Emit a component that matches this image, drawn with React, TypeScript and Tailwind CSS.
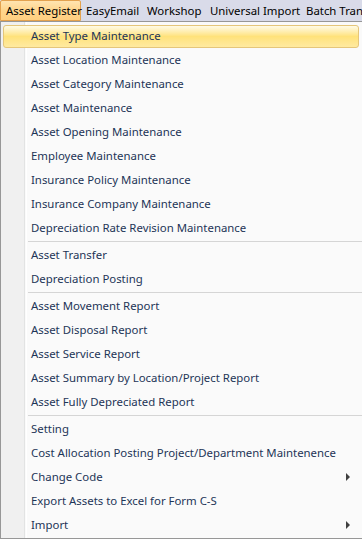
import React from "react";

type Entry = { label: string; sub?: boolean; active?: boolean } | "sep";

const entries: Entry[] = [
  { label: "Asset Type Maintenance", active: true },
  { label: "Asset Location Maintenance" },
  { label: "Asset Category Maintenance" },
  { label: "Asset Maintenance" },
  { label: "Asset Opening Maintenance" },
  { label: "Employee Maintenance" },
  { label: "Insurance Policy Maintenance" },
  { label: "Insurance Company Maintenance" },
  { label: "Depreciation Rate Revision Maintenance" },
  "sep",
  { label: "Asset Transfer" },
  { label: "Depreciation Posting" },
  "sep",
  { label: "Asset Movement Report" },
  { label: "Asset Disposal Report" },
  { label: "Asset Service Report" },
  { label: "Asset Summary by Location/Project Report" },
  { label: "Asset Fully Depreciated Report" },
  "sep",
  { label: "Setting" },
  { label: "Cost Allocation Posting Project/Department Maintenence" },
  { label: "Change Code", sub: true },
  { label: "Export Assets to Excel for Form C-S" },
  { label: "Import", sub: true },
];

const font = { fontFamily: '"Noto Sans", "Open Sans", sans-serif' };

export default function App() {
  return (
    <div className="w-[362px] h-[539px] overflow-hidden bg-white text-[11.4px] leading-none" style={font}>
      {/* menu bar */}
      <div className="h-[21px] flex items-stretch bg-[#d9dbe9] text-black whitespace-nowrap overflow-hidden">
        <div className="w-[81px] shrink-0 flex items-center pl-[5px] border border-[#e3a24f] rounded-t-[2px] bg-gradient-to-b from-[#ffe4b0] via-[#ffd58c] to-[#ffcf80]">
          Asset Register
        </div>
        <div className="w-[61px] shrink-0 flex items-center pl-[5px]">EasyEmail</div>
        <div className="w-[64px] shrink-0 flex items-center pl-[5px]">Workshop</div>
        <div className="w-[95px] shrink-0 flex items-center pl-[4px]">Universal Import</div>
        <div className="shrink-0 flex items-center pl-[5px]">Batch Transaction</div>
      </div>
      {/* dropdown */}
      <div className="relative h-[518px] w-[380px] border border-[#979797] bg-[#fafafa] pt-[2px]">
        <div className="absolute left-0 top-0 bottom-0 w-[24px] bg-[#f0f0f0] border-r border-[#e2e3e3]" />
        <div className="absolute left-[25px] top-0 bottom-0 w-px bg-white" />
        <div className="relative flex flex-col">
          {entries.map((e, i) =>
            e === "sep" ? (
              <div key={i} className="h-[3px] flex flex-col justify-center pl-[27px]">
                <div className="h-px bg-[#d5d5d5]" />
              </div>
            ) : (
              <div key={i} className="relative h-6 flex items-center">
                {e.active && (
                  <div className="absolute left-[2px] right-[20px] top-px bottom-0 rounded-[3px] border border-[#e5c67a] bg-gradient-to-b from-[#fffbe6] via-[#ffe27a] to-[#ffeaa0]" />
                )}
                <span className="relative pl-[30px] text-[#1d3557] whitespace-nowrap">{e.label}</span>
                {e.sub && (
                  <svg className="absolute left-[345px] top-[8px]" width="5" height="8" viewBox="0 0 5 8">
                    <path d="M0 0 L4 4 L0 8 Z" fill="#404040" />
                  </svg>
                )}
              </div>
            )
          )}
        </div>
      </div>
    </div>
  );
}
